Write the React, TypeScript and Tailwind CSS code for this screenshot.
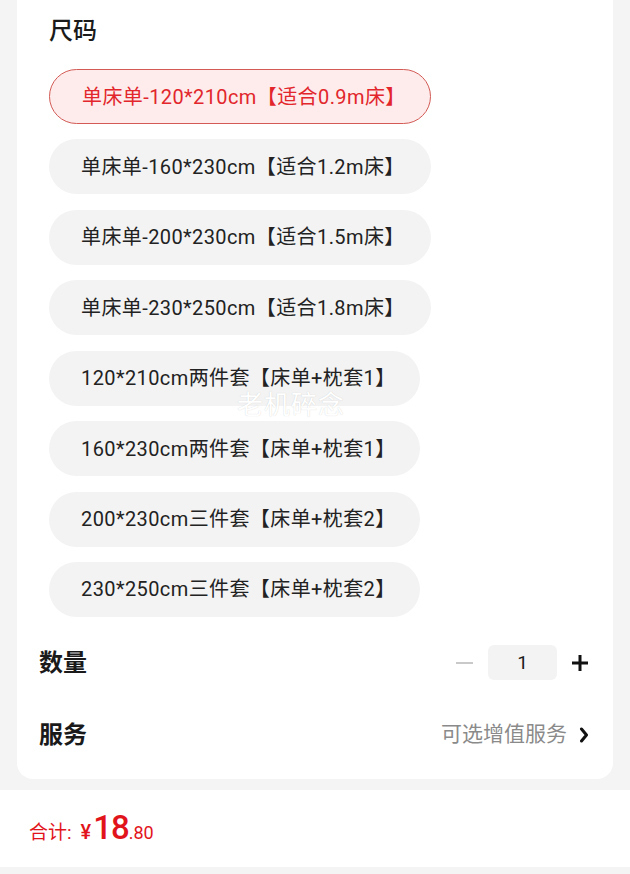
const sizes = [
  { label: "单床单-120*210cm【适合0.9m床】", wide: true },
  { label: "单床单-160*230cm【适合1.2m床】", wide: true },
  { label: "单床单-200*230cm【适合1.5m床】", wide: true },
  { label: "单床单-230*250cm【适合1.8m床】", wide: true },
  { label: "120*210cm两件套【床单+枕套1】", wide: false },
  { label: "160*230cm两件套【床单+枕套1】", wide: false },
  { label: "200*230cm三件套【床单+枕套2】", wide: false },
  { label: "230*250cm三件套【床单+枕套2】", wide: false },
]

function SizePill({ label, wide, active }: { label: string; wide: boolean; active: boolean }) {
  return (
    <div
      className={
        "flex h-[55px] items-center rounded-full pl-[32px] text-[20px] tracking-[0.4px] " +
        (wide ? "w-[382px] " : "w-[371px] ") +
        (active
          ? "border border-[#d35a55] bg-[#fdeceb] text-[#e2262b]"
          : "bg-[#f3f3f3] text-[#222222]")
      }
    >
      {label}
    </div>
  )
}

export default function App() {
  return (
    <div
      className="relative h-[874px] w-[630px] overflow-hidden bg-[#f4f4f4]"
      style={{ fontFamily: 'Roboto, "Noto Sans CJK SC", sans-serif' }}
    >
      <div className="mx-[17px] rounded-b-[16px] bg-white pb-[18px] pr-[24px]">
        <div className="pl-[32px] pt-[14px] text-[24px] font-medium leading-[34px] text-[#1a1a1a]">尺码</div>

        <div className="mt-[21px] flex flex-col gap-[15.43px] pl-[32px]">
          {sizes.map((s, i) => (
            <SizePill key={s.label} label={s.label} wide={s.wide} active={i === 0} />
          ))}
        </div>

        <div className="mt-[20px] flex h-[52px] items-center justify-between pl-[22px]">
          <span className="text-[24px] font-bold text-[#1a1a1a]">数量</span>
          <div className="flex items-center">
            <span className="block h-[2.5px] w-[17px] bg-[#c9c9c9]" />
            <div className="ml-[15px] flex h-[35px] w-[69px] items-center justify-center rounded-[6px] bg-[#f3f3f3] text-[19px] text-[#1a1a1a]">
              1
            </div>
            <svg className="ml-[14px]" width="18" height="18" viewBox="0 0 18 18">
              <path d="M9 1v16M1 9h16" stroke="#111" strokeWidth="3" />
            </svg>
          </div>
        </div>

        <div className="mt-[20px] flex h-[52px] items-center justify-between pl-[22px]">
          <span className="text-[24px] font-bold text-[#1a1a1a]">服务</span>
          <div className="flex items-center gap-[12px]">
            <span className="text-[21px] text-[#8a8a8a]">可选增值服务</span>
            <svg width="10" height="16" viewBox="0 0 10 16">
              <path d="M2.5 2l5 6-5 6" fill="none" stroke="#111" strokeWidth="3" strokeLinecap="round" strokeLinejoin="round" />
            </svg>
          </div>
        </div>
      </div>

      <div className="mt-[11px] flex h-[77px] items-baseline bg-white pl-[29px] pt-[21px] text-[#e2141b]">
        <span className="text-[19px]">合计:</span>
        <span className="ml-[9px] text-[20px] font-medium">¥</span>
        <span className="ml-[2px] text-[33px] font-medium leading-none tracking-[-1px]">18</span>
        <span className="text-[18px]">.80</span>
      </div>

      <div className="pointer-events-none absolute left-[237px] top-[386px] text-[26px] tracking-[1px] text-white [text-shadow:0_0_1px_rgba(0,0,0,0.18)]">
        老机碎念
      </div>
    </div>
  )
}
